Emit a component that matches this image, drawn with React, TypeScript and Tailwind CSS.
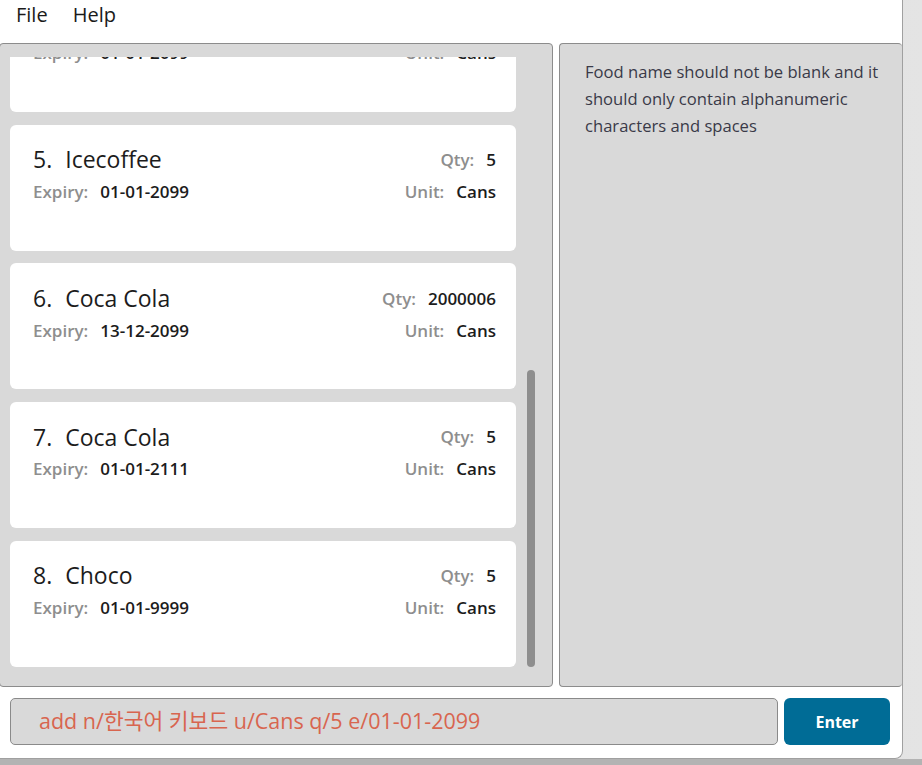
import React from 'react';

interface FoodItem {
  index: number;
  name: string;
  qty: string;
  expiry: string;
  unit: string;
}

const items: FoodItem[] = [
  { index: 4, name: 'Milk', qty: '5', expiry: '01-01-2099', unit: 'Cans' },
  { index: 5, name: 'Icecoffee', qty: '5', expiry: '01-01-2099', unit: 'Cans' },
  { index: 6, name: 'Coca Cola', qty: '2000006', expiry: '13-12-2099', unit: 'Cans' },
  { index: 7, name: 'Coca Cola', qty: '5', expiry: '01-01-2111', unit: 'Cans' },
  { index: 8, name: 'Choco', qty: '5', expiry: '01-01-9999', unit: 'Cans' },
];

const FoodCard: React.FC<{ item: FoodItem }> = ({ item }) => (
  <div className="h-[126px] shrink-0 rounded-[6px] bg-white pl-[23px] pr-[20px] pt-[20px]">
    <div className="flex h-[30px] items-center justify-between">
      <div className="flex items-center text-[23px] text-[#1c1c1c]">
        <span>{item.index}.</span>
        <span className="ml-[13px]">{item.name}</span>
      </div>
      <div className="flex items-center text-[17px] font-semibold">
        <span className="text-[#8e8e8e]">Qty:</span>
        <span className="ml-[12px] text-[#1c1c1c]">{item.qty}</span>
      </div>
    </div>
    <div className="mt-[2px] flex h-[30px] items-center justify-between text-[17px] font-semibold">
      <div className="flex items-center">
        <span className="text-[#8e8e8e]">Expiry:</span>
        <span className="ml-[12px] text-[#1c1c1c]">{item.expiry}</span>
      </div>
      <div className="flex items-center">
        <span className="text-[#8e8e8e]">Unit:</span>
        <span className="ml-[12px] text-[#1c1c1c]">{item.unit}</span>
      </div>
    </div>
  </div>
);

export default function App() {
  return (
    <div
      className="flex h-[765px] w-[922px] flex-col overflow-hidden bg-[#b3b3b3]"
      style={{ fontFamily: '"Open Sans", "Noto Sans CJK KR", sans-serif' }}
    >
      <div className="flex h-[759px] shrink-0 bg-gradient-to-r from-[#d6d6d6] to-[#e4e4e4]">
        <div className="flex h-full w-[903px] shrink-0 flex-col rounded-br-[8px] border-r border-b border-[#a0a0a0] bg-white">
          {/* menu bar */}
          <div className="flex h-[43px] shrink-0 items-center gap-[25px] pl-[16px] pb-[13px] text-[20px] text-[#1a1a1a]">
            <span>File</span>
            <span>Help</span>
          </div>

          {/* main panels */}
          <div className="flex h-[644px] shrink-0">
            <div className="relative ml-[-1px] h-full w-[554px] rounded-[4px] border border-[#8c8c8c] bg-[#d9d9d9] pt-[13px] pb-[19px]">
              <div className="h-full overflow-hidden pl-[10px] pr-[36px]">
                <div className="mt-[-71px] flex flex-col gap-[12.67px]">
                  {items.map((item) => (
                    <FoodCard key={item.index} item={item} />
                  ))}
                </div>
              </div>
              <div className="absolute left-[527px] top-[326px] h-[297px] w-[8px] rounded-full bg-[#8e8e8e]" />
            </div>
            <div className="ml-[6px] h-full flex-1 rounded-[4px] border border-r-0 border-[#8c8c8c] bg-[#d9d9d9] pl-[25px] pr-[11px] pt-[14px]">
              <p className="text-[16.6px] leading-[27px] text-[#3a3a48]">
                Food name should not be blank and it should only contain alphanumeric characters and spaces
              </p>
            </div>
          </div>

          {/* command box */}
          <div className="flex flex-1 items-start gap-[6px] pl-[10px] pt-[11px]">
            <div className="flex h-[47px] w-[768px] items-center rounded-[5px] border border-[#8a8a8a] bg-[#d9d9d9] pl-[28px]">
              <span className="whitespace-nowrap text-[21.5px] text-[#d8654f]">
                add n/한국어 키보드 u/Cans q/5 e/01-01-2099
              </span>
            </div>
            <button className="h-[47px] w-[106px] rounded-[6px] bg-[#006c96] text-[16px] font-bold text-white">
              Enter
            </button>
          </div>
        </div>
      </div>
    </div>
  );
}
